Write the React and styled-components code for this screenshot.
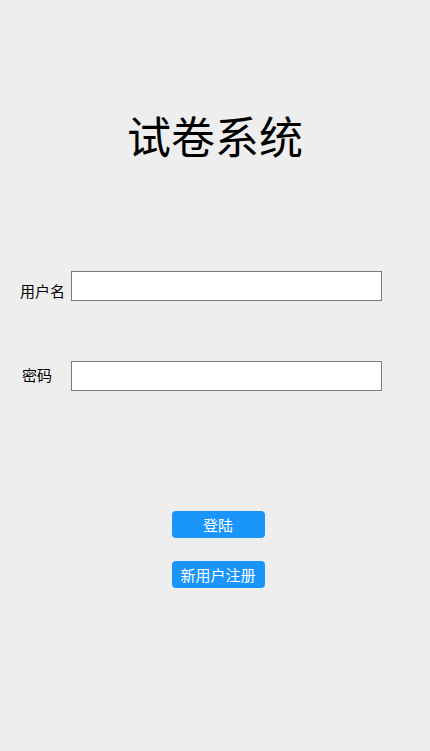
import React from "react";
import styled, { createGlobalStyle } from "styled-components";

const Global = createGlobalStyle`
  html, body { margin: 0; padding: 0; background: #eeeeee; }
  body { font-family: "Noto Sans CJK SC", "Liberation Sans", sans-serif; }
`;

const Page = styled.div`
  width: 430px;
  height: 751px;
  background: #eeeeee;
  box-sizing: border-box;
  display: flex;
  flex-direction: column;
`;

const Title = styled.h1`
  margin: 110px 0 0;
  height: 50px;
  line-height: 50px;
  font-size: 44px;
  font-weight: 400;
  text-align: center;
  color: #000;
  font-family: "Noto Sans CJK SC", sans-serif;
  padding-left: 0;
`;

const Form = styled.div`
  margin-top: 111px;
  display: flex;
  flex-direction: column;
  gap: 60px;
`;

const Row = styled.div`
  display: flex;
  align-items: center;
  padding-left: 20px;
`;

const Label = styled.label`
  width: 51px;
  box-sizing: border-box;
  padding-left: ${(p) => p.$indent || 0}px;
  font-size: 15px;
  color: #000;
  font-family: "Noto Sans CJK SC", sans-serif;
  line-height: 20px;
  margin-top: ${(p) => p.$dy || 0}px;
`;

const Input = styled.input`
  width: 311px;
  height: 30px;
  box-sizing: border-box;
  border: 1px solid #7a7a7a;
  background: #fff;
  margin: 0;
  padding: 0 4px;
  outline: none;
`;

const Buttons = styled.div`
  margin-top: 120px;
  display: flex;
  flex-direction: column;
  align-items: center;
  gap: 23px;
  padding-left: 6px;
`;

const Button = styled.button`
  width: 93px;
  height: 27px;
  border: none;
  border-radius: 4px;
  background: #1a96fb;
  color: #fff;
  font-size: 15px;
  font-family: "Noto Sans CJK SC", sans-serif;
  padding: 0;
  line-height: 27px;
  cursor: pointer;
`;

export default function App() {
  return (
    <>
      <Global />
      <Page>
        <Title>试卷系统</Title>
        <Form>
          <Row>
            <Label $dy={10}>用户名</Label>
            <Input type="text" />
          </Row>
          <Row>
            <Label $indent={2} $dy={-2}>密码</Label>
            <Input type="password" />
          </Row>
        </Form>
        <Buttons>
          <Button>登陆</Button>
          <Button>新用户注册</Button>
        </Buttons>
      </Page>
    </>
  );
}
